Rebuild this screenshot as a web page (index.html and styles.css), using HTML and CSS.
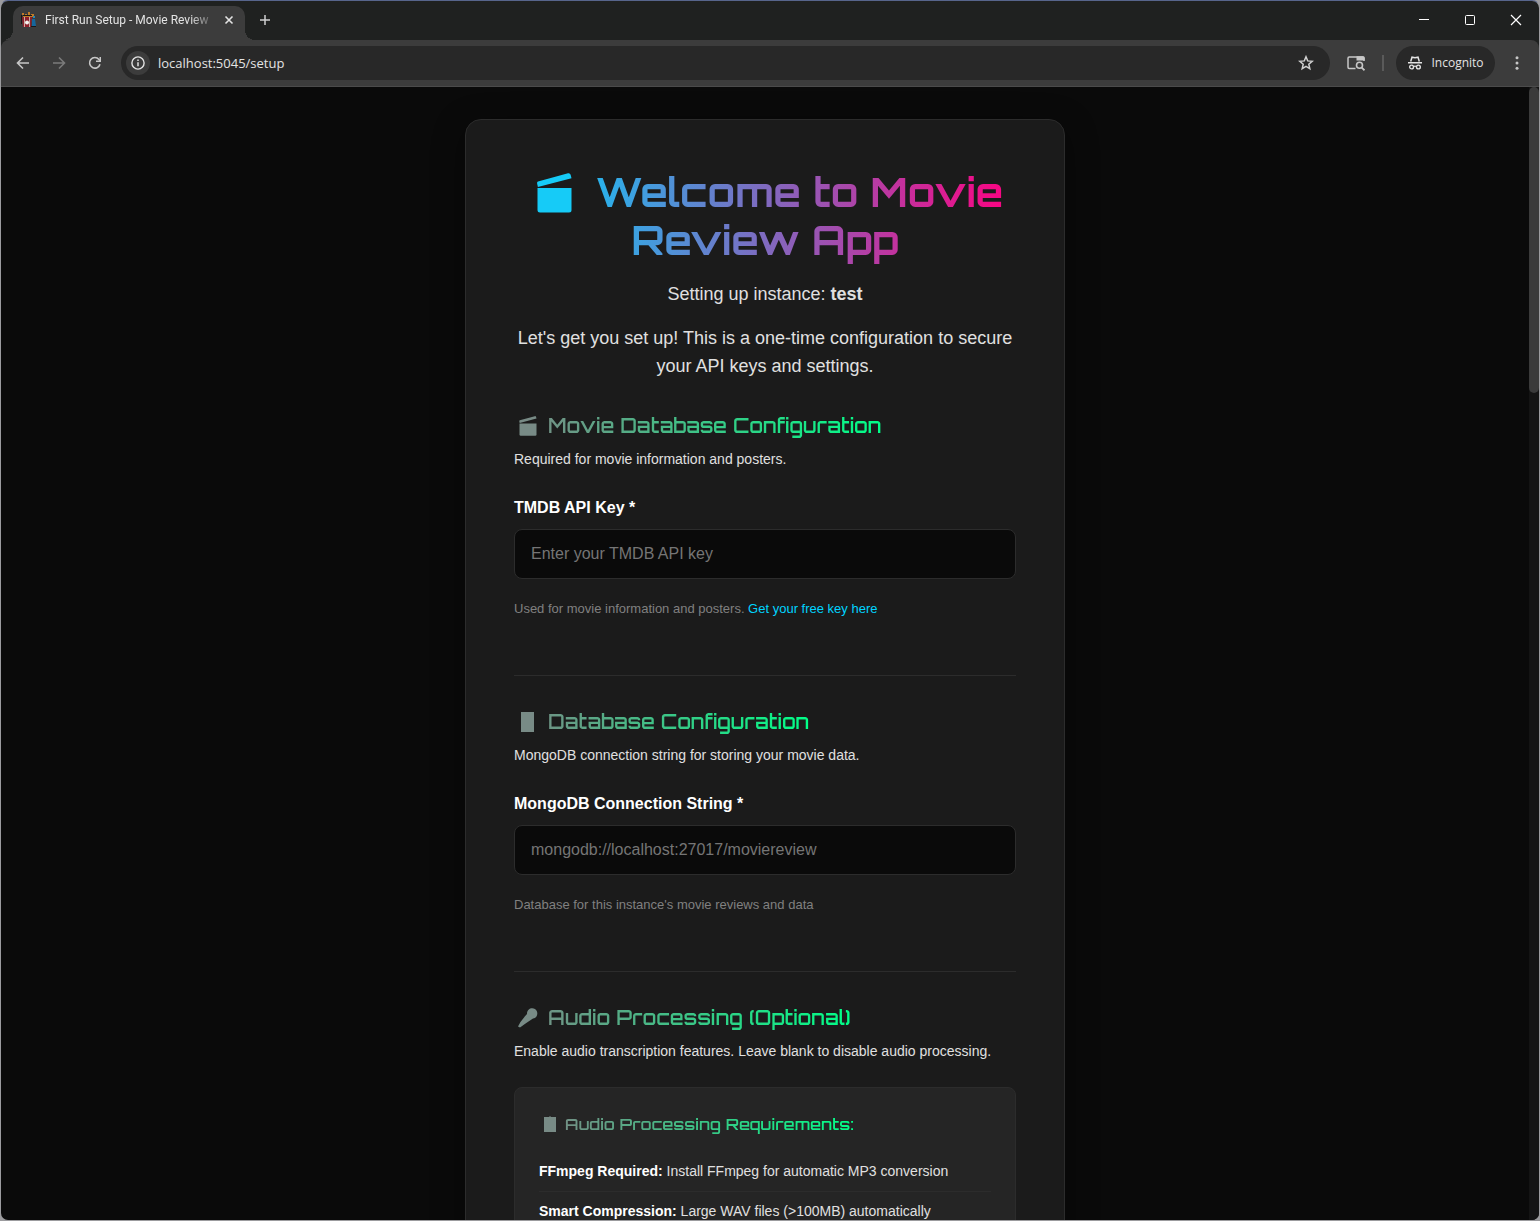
FILE: index.html
```html
<!DOCTYPE html>
<html lang="en">
<head>
<meta charset="utf-8">
<meta name="viewport" content="width=device-width, initial-scale=1">
<title>First Run Setup - Movie Review App</title>
<link rel="stylesheet" href="styles.css">
</head>
<body>
<svg class="defs" width="0" height="0" aria-hidden="true">
  <symbol id="clapper" viewBox="0 0 35 40">
    <path d="M1 8.500 31 .3q2-.5 2.600 1.500l.9 3.400L.9 14 .2 11Q-.2 9 1 8.500Z"/>
    <path d="M.5 15H34.500V37q0 2.500-2.500 2.500H3Q.5 39.500.5 37Z"/>
  </symbol>
</svg>
<div class="window">
  <header class="chrome">
    <div class="tabstrip">
      <div class="tab">
        <svg class="favicon" width="16" height="16" viewBox="0 0 16 16" aria-hidden="true">
          <path d="M1 1h2v2H1zM4 2h2v2H4zM7 0h2v3H7zM10 2h3v2h-3zM2 4h11v1H2z" fill="#c07a28"/>
          <path d="M1 5h10l-1 10H2z" fill="#8d1f2a"/>
          <path d="M3 5h1v10H3zM8 5h1v10H8z" fill="#c9a9a4"/>
          <circle cx="6" cy="10.500" r="2" fill="#f3f1ee"/>
          <path d="M11 7h3l1 7h-4z" fill="#16669c"/>
          <path d="M12 4h2v2h-2z" fill="#2988b8"/>
          <path d="M0 3h1v9H0zM2 3h9v1H2zM10 14h5v1h-5z" fill="#171717"/>
        </svg>
        <span class="tab-title">First Run Setup - Movie Review</span>
        <button class="tab-close" aria-label="Close tab"><svg width="10" height="10" viewBox="0 0 10 10"><path d="m1.500 1.500 7 7m0-7-7 7" stroke="#e3e3e3" stroke-width="1.600"/></svg></button>
      </div>
      <button class="new-tab" aria-label="New tab"><svg width="12" height="12" viewBox="0 0 12 12"><path d="M6 1v10M1 6h10" stroke="#d0d0d0" stroke-width="1.500"/></svg></button>
      <div class="window-controls">
        <button aria-label="Minimize"><svg width="12" height="12" viewBox="0 0 12 12"><path d="M1 5.500h10" stroke="#fff"/></svg></button>
        <button aria-label="Maximize"><svg width="12" height="12" viewBox="0 0 12 12"><rect x="1.500" y="1.500" width="9" height="9" rx="1" fill="none" stroke="#fff"/></svg></button>
        <button aria-label="Close"><svg width="12" height="12" viewBox="0 0 12 12"><path d="m1 1 10 10M11 1 1 11" stroke="#fff" stroke-width="1.200"/></svg></button>
      </div>
    </div>
    <div class="toolbar">
      <button class="nav" aria-label="Back"><svg width="14" height="14" viewBox="0 0 14 14"><path d="M13 7H2M7 1.500 1.500 7 7 12.500" fill="none" stroke="#c7c7c7" stroke-width="1.600"/></svg></button>
      <button class="nav" aria-label="Forward"><svg width="14" height="14" viewBox="0 0 14 14"><path d="M1 7h11M7 1.500 12.500 7 7 12.500" fill="none" stroke="#7b7b7b" stroke-width="1.600"/></svg></button>
      <button class="nav" aria-label="Reload"><svg width="14" height="14" viewBox="0 0 14 14"><path d="M12 8.200A5.300 5.300 0 1 1 11 3.500L12.600 5" fill="none" stroke="#c7c7c7" stroke-width="1.600"/><path d="M13 1v5H8V4.600h3.500V1Z" fill="#c7c7c7"/></svg></button>
      <div class="omnibox">
        <button class="site-info" aria-label="View site information"><svg width="14" height="14" viewBox="0 0 14 14"><circle cx="7" cy="7" r="6.100" fill="none" stroke="#e3e3e3" stroke-width="1.400"/><path d="M7 6.200V10.300M7 3.600V5" stroke="#e3e3e3" stroke-width="1.500"/></svg></button>
        <input class="address" type="text" value="localhost:5045/setup" aria-label="Address">
        <button class="star" aria-label="Bookmark this tab"><svg width="16" height="16" viewBox="0 0 16 16"><path d="m8 1.800 1.700 4.100 4.500.4-3.400 2.900 1 4.400L8 11.300l-3.800 2.300 1-4.400L1.800 6.300l4.500-.4Z" fill="none" stroke="#d0d0d0" stroke-width="1.500"/></svg></button>
      </div>
      <button class="search-panel" aria-label="Search this page"><svg width="18" height="16" viewBox="0 0 18 16"><path d="M8.500 13.500H2.200Q1 13.500 1 12.300V3.200Q1 2 2.200 2H15.800Q17 2 17 3.200V6" fill="none" stroke="#c7c7c7" stroke-width="1.500"/><path d="M9.500 1.300H16Q17.700 1.300 17.700 3V5.500H9.500Z" fill="#c7c7c7"/><circle cx="12.500" cy="10.200" r="3" fill="none" stroke="#c7c7c7" stroke-width="1.600"/><path d="m14.500 12.300 3 3" stroke="#c7c7c7" stroke-width="1.700"/></svg></button>
      <span class="separator"></span>
      <button class="incognito"><svg width="16" height="16" viewBox="0 0 16 16" aria-hidden="true"><path d="M3.700 6.500 5 2.200l3 .6 3-.6 1.300 4.300" fill="none" stroke="#e3e3e3" stroke-width="1.500"/><path d="M1 7.700h14" stroke="#e3e3e3" stroke-width="1.500"/><circle cx="4.600" cy="12" r="1.900" fill="none" stroke="#e3e3e3" stroke-width="1.400"/><circle cx="11.400" cy="12" r="1.900" fill="none" stroke="#e3e3e3" stroke-width="1.400"/><path d="M6.500 11.500q1.500-.8 3 0" fill="none" stroke="#e3e3e3" stroke-width="1.200"/></svg>Incognito</button>
      <button class="menu" aria-label="Menu"><svg width="4" height="14" viewBox="0 0 4 14" fill="#c7c7c7"><circle cx="2" cy="1.700" r="1.500"/><circle cx="2" cy="7" r="1.500"/><circle cx="2" cy="12.300" r="1.500"/></svg></button>
    </div>
  </header>

  <div class="viewport">
    <main class="page">
      <form class="card">
        <h1><svg class="h1-icon" width="35" height="40" aria-hidden="true"><use href="#clapper"/></svg>Welcome to Movie Review App</h1>
        <p class="lead">Setting up instance: <strong>test</strong></p>
        <p class="lead">Let's get you set up! This is a one-time configuration to secure your API keys and settings.</p>

        <section class="group">
          <h3><svg width="26" height="20" viewBox="0 0 26 20" aria-hidden="true"><use href="#clapper" x="5" width="18" height="20"/></svg>Movie Database Configuration</h3>
          <p class="about">Required for movie information and posters.</p>
          <label for="tmdb">TMDB API Key *</label>
          <input class="field" id="tmdb" type="text" placeholder="Enter your TMDB API key">
          <p class="hint">Used for movie information and posters. <a href="#">Get your free key here</a></p>
        </section>

        <section class="group">
          <h3><svg width="26" height="20" viewBox="0 0 26 20" aria-hidden="true"><path d="M7 0h13v20H7z"/></svg>Database Configuration</h3>
          <p class="about">MongoDB connection string for storing your movie data.</p>
          <label for="mongo">MongoDB Connection String *</label>
          <input class="field" id="mongo" type="text" placeholder="mongodb://localhost:27017/moviereview">
          <p class="hint">Database for this instance's movie reviews and data</p>
        </section>

        <section class="group">
          <h3><svg width="26" height="20" viewBox="0 0 26 20" aria-hidden="true"><path d="M13 6C13 1 17.500-.8 21 1 25 4 23.500 10 19 10.500Q12 15 6 19.500L4 18.500Q6.500 13 13 6Z"/></svg>Audio Processing (Optional)</h3>
          <p class="about">Enable audio transcription features. Leave blank to disable audio processing.</p>
          <div class="requirements">
            <h4><svg width="20" height="16" viewBox="0 0 20 16" aria-hidden="true"><path d="M5 1h5l1-1 1 1h5v15H5z"/></svg>Audio Processing Requirements:</h4>
            <ul>
              <li><strong>FFmpeg Required:</strong> Install FFmpeg for automatic MP3 conversion</li>
              <li><strong>Smart Compression:</strong> Large WAV files (&gt;100MB) automatically</li>
            </ul>
          </div>
        </section>
      </form>
    </main>
    <div class="scrollbar"><div class="thumb"></div></div>
  </div>
</div>
</body>
</html>
```
FILE: styles.css
```css
* { box-sizing: border-box; }

body {
  margin: 0;
  background: #9c9c9f;
  color: #e0e0e0;
  font-family: "Liberation Sans", Arial, sans-serif;
}

button {
  display: flex;
  align-items: center;
  justify-content: center;
  padding: 0;
  border: 0;
  background: none;
  color: inherit;
  font: inherit;
}

.defs { position: absolute; }

.window {
  display: flex;
  flex-direction: column;
  height: 100vh;
  border: 1px solid #9c9c9f;
  border-top-color: #57658c;
  border-radius: 8px;
  overflow: hidden;
}

/* Browser frame */
.chrome {
  flex: none;
  background: #1f2120;
  color: #e3e3e3;
  font: 12px/16px "Open Sans", sans-serif;
}

.tabstrip {
  display: flex;
  align-items: center;
  height: 39px;
  padding-left: 12px;
}

.tab {
  display: flex;
  align-items: center;
  align-self: flex-end;
  position: relative;
  width: 232px;
  height: 34px;
  padding: 0 8px 6px;
  border-radius: 10px 10px 0 0;
  background: #3c3c3c;
}

.tab::before,
.tab::after {
  content: "";
  position: absolute;
  bottom: 0;
  width: 10px;
  height: 10px;
}

.tab::before {
  right: 100%;
  background: radial-gradient(circle at 0 0, transparent 10px, #3c3c3c 10px);
}

.tab::after {
  left: 100%;
  background: radial-gradient(circle at 100% 0, transparent 10px, #3c3c3c 10px);
}

.favicon { flex: none; margin-right: 8px; }

.tab-title {
  flex: 1;
  white-space: nowrap;
  font: 12px/16px Roboto, sans-serif;
  mask-image: linear-gradient(90deg, #000 88%, transparent 105%);
}

.tab-close { width: 16px; height: 16px; margin-left: 12px; }
.new-tab { width: 28px; height: 28px; margin: 0 0 2px 6px; }

.window-controls { display: flex; margin: 0 0 2px auto; }
.window-controls button { width: 46px; height: 36px; }

.toolbar {
  display: flex;
  align-items: center;
  height: 47px;
  padding: 0 4px;
  border-bottom: 1px solid #4b4b4b;
  border-radius: 8px 8px 0 0;
  background: #3c3c3c;
}

.nav { width: 36px; height: 34px; }

.omnibox {
  display: flex;
  flex: 1;
  align-items: center;
  height: 34px;
  margin-left: 8px;
  padding: 0 16px 0 5px;
  border-radius: 17px;
  background: #282828;
}

.site-info {
  width: 24px;
  height: 24px;
  border-radius: 50%;
  background: #3c3c3c;
}

.address {
  flex: 1;
  min-width: 0;
  padding: 0 8px;
  border: 0;
  outline: 0;
  background: none;
  color: #e3e3e3;
  font: 13px/20px "Open Sans", sans-serif;
}

.search-panel { width: 34px; height: 34px; margin-left: 9px; }

.separator {
  width: 2px;
  height: 16px;
  margin: 0 12px 0 9px;
  background: #5a5a5a;
}

.incognito {
  gap: 8px;
  width: 99px;
  height: 34px;
  border-radius: 17px;
  background: #282828;
}

.menu { width: 36px; height: 34px; margin-left: 4px; }

/* Page */
.viewport {
  display: flex;
  flex: 1;
  min-height: 0;
  background: #0a0a0a;
}

.page {
  flex: 1;
  padding: 32px;
  overflow: hidden;
}

.scrollbar { width: 10px; background: #141414; }
.thumb { height: 27%; border-radius: 5px; background: #3a3a3a; }

.card {
  max-width: 600px;
  margin: 0 auto;
  padding: 48px;
  border: 1px solid #2c2c2c;
  border-radius: 16px;
  background: #1b1b1b;
  box-shadow: 0 8px 32px rgba(0, 0, 0, 0.4);
}

h1, h3, h4 {
  margin: 0;
  color: transparent;
  background-clip: text;
  -webkit-background-clip: text;
  font-family: Orbitron, "DejaVu Sans", sans-serif;
  font-weight: 600;
}

h1 {
  margin-bottom: 16px;
  background-image: linear-gradient(90deg, #00d4ff, #ff0080);
  font-size: 40px;
  font-weight: 700;
  line-height: 48px;
  text-align: center;
}

.h1-icon {
  margin: 0 24px 0 10px;
  vertical-align: -6px;
  fill: #16cbf7;
}

.lead {
  margin: 0 0 16px;
  font-size: 18px;
  line-height: 28px;
  text-align: center;
}

h3, h4 {
  display: flex;
  align-items: center;
  width: fit-content;
  background-image: linear-gradient(90deg, #7b8885, #00ff88);
  white-space: nowrap;
}

h3 svg, h4 svg { fill: #788b86; }

h3 {
  gap: 8px;
  margin-bottom: 8px;
  font-size: 20px;
  line-height: 28px;
}

.group { padding-bottom: 56px; }
.lead + .group { margin-top: 32px; }

.group + .group {
  padding-top: 32px;
  border-top: 1px solid #2c2c2c;
}

.about {
  margin: 0 0 24px;
  font-size: 14px;
  line-height: 23px;
}

label {
  display: block;
  margin-bottom: 8px;
  color: #fff;
  font-size: 16px;
  font-weight: 700;
  line-height: 26px;
}

.field {
  display: block;
  width: 100%;
  height: 50px;
  padding: 0 16px;
  border: 1px solid #2c2c2c;
  border-radius: 8px;
  background: #0a0a0a;
  color: #fff;
  font: 16px "Liberation Sans", Arial, sans-serif;
}

.field::placeholder { color: #757575; }

.hint {
  margin: 20px 0 0;
  color: #808080;
  font-size: 13px;
  line-height: 20px;
}

.hint a { color: #00d4ff; text-decoration: none; }

.requirements {
  padding: 24px;
  border: 1px solid #2c2c2c;
  border-radius: 8px;
  background: #252525;
}

h4 {
  gap: 6px;
  margin-bottom: 16px;
  font-size: 16px;
  line-height: 24px;
}

ul { margin: 0; padding: 0; list-style: none; }

li {
  padding: 8px 0;
  border-bottom: 1px solid #2c2c2c;
  font-size: 14px;
  line-height: 23px;
}

li strong { color: #fff; }
```
